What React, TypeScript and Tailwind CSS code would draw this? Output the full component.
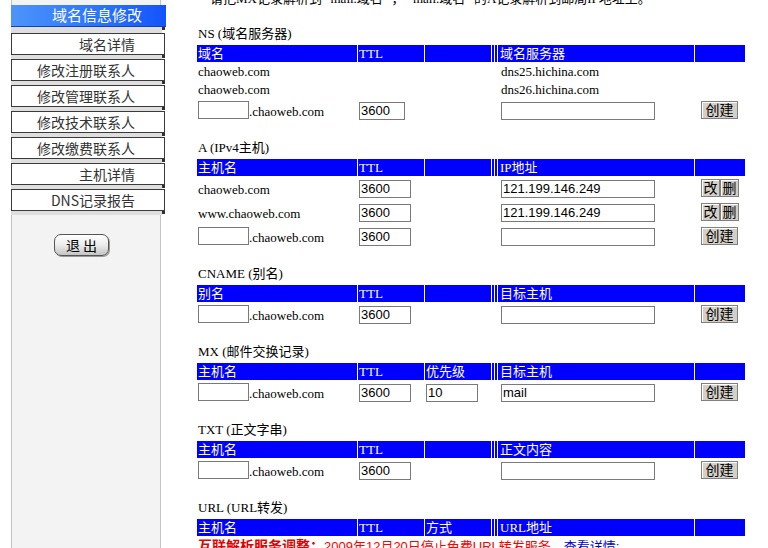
import React from 'react';

const serif = "font-['Liberation_Serif','Noto_Sans_CJK_SC',serif]";
const sans = "font-['Liberation_Sans','Noto_Sans_CJK_SC',sans-serif]";

const menu = ['域名详情', '修改注册联系人', '修改管理联系人', '修改技术联系人', '修改缴费联系人', '主机详情', 'DNS记录报告'];

// gray strip under each sidebar button, with a dark notch at the right end
const Strip = ({ h = 4 }: { h?: number }) => (
  <div className={`flex w-[154px] ${h === 6 ? 'h-[6px]' : 'h-[4px]'}`}>
    <div className="flex-1 bg-[#dedede]" />
    <div className="w-[3px] h-[3px] bg-[#303030]" />
  </div>
);

const Sidebar: React.FC = () => (
  <aside className="w-[165px] shrink-0 h-[548px]">
    <div className="ml-[11px] w-[150px] h-full bg-[#f3f3f3] border-l border-r border-[#c4c4c4] pt-[5px]">
      <div className="-ml-px w-[155px] h-[22px] bg-gradient-to-r from-[#4d94fa] via-[#2f78fb] to-[#1553fb] border-b border-[#1a3fb0] flex items-center justify-end pr-[24px] text-white text-[15px] font-['Noto_Sans_CJK_SC',sans-serif]">
        域名信息修改
      </div>
      <div className="-ml-px">
        <Strip h={6} />
      </div>
      {menu.map((m) => (
        <div key={m} className="-ml-px">
          <div className="w-[154px] h-[22px] bg-white border border-[#3a3a3a] flex items-center justify-end pr-[29px] text-[14px] text-[#333] font-['Noto_Sans_CJK_SC',sans-serif]">
            {m}
          </div>
          <Strip />
        </div>
      ))}
      <div className="mt-[19px] ml-[42px] w-[55px] h-[22px] rounded-[7px] border border-[#555] bg-gradient-to-b from-white via-[#ececec] to-[#c4c4c4] shadow-[1px_1px_0_#999] flex items-center justify-center text-[14px] text-black font-['Noto_Sans_CJK_SC',sans-serif]">
        退&nbsp;出
      </div>
    </div>
  </aside>
);

const Header = ({ a, c3 = '', c6 }: { a: string; c3?: string; c6: string }) => (
  <div className={`flex gap-px h-[17px] leading-[17px] text-white text-[13px] ${serif}`}>
    <div className="w-[160px] bg-[#0000ff] pl-px">{a}</div>
    <div className="w-[66px] bg-[#0000ff] pl-px">TTL</div>
    <div className="w-[66px] bg-[#0000ff] pl-px">{c3}</div>
    <div className="w-[2px] bg-[#0000ff]" />
    <div className="w-[2px] bg-[#0000ff]" />
    <div className="w-[196px] bg-[#0000ff] pl-[2px]">{c6}</div>
    <div className="w-[50px] bg-[#0000ff]" />
  </div>
);

const Input = ({ w, value = '' }: { w: string; value?: string }) => (
  <input
    readOnly
    value={value}
    className={`${w} h-[18px] border border-[#7a7a7a] bg-white px-px text-[13px] leading-[16px] text-black outline-none ${sans}`}
  />
);

const Btn = ({ children, w = 'w-[37px]' }: { children: React.ReactNode; w?: string }) => (
  <div className={`${w} h-[18px] bg-[#d4d0c8] border border-[#808080] shadow-[inset_1px_1px_0_#fff] flex items-center justify-center text-[14px] text-black ${sans}`}>
    {children}
  </div>
);

interface RowProps {
  name?: string;
  ttl?: boolean;
  ttlW?: string;
  prio?: string;
  target?: string;
  edit?: boolean;
}

// form row: either an existing record (name given) or a new one to create
const Row = ({ name, ttl = true, ttlW = 'w-[52px]', prio, target = '', edit }: RowProps) => (
  <div className={`flex h-[24px] pt-[3px] text-[13px] ${serif}`}>
    <div className="w-[161px] pl-px flex items-center h-[18px]">
      {name ? (
        <span className="leading-[18px] mt-[4px]">{name}</span>
      ) : (
        <>
          <Input w="w-[51px]" />
          <span className="mt-[4px]">.chaoweb.com</span>
        </>
      )}
    </div>
    <div className="w-[67px] pl-px">{ttl && <Input w={ttlW} value="3600" />}</div>
    <div className="w-[67px] pl-px">{prio && <Input w="w-[52px]" value={prio} />}</div>
    <div className="w-[6px]" />
    <div className="w-[197px] pl-[3px]">
      <Input w="w-[154px]" value={target} />
    </div>
    <div className="pl-[6px] flex">
      {edit ? (
        <>
          <Btn w="w-[19px]">改</Btn>
          <Btn w="w-[19px]">删</Btn>
        </>
      ) : (
        <Btn>创建</Btn>
      )}
    </div>
  </div>
);

const TextRow = ({ a, b }: { a: string; b: string }) => (
  <div className={`flex h-[18px] leading-[18px] text-[13px] pt-px ${serif}`}>
    <div className="w-[301px] pl-px">{a}</div>
    <div className="pl-[3px]">{b}</div>
  </div>
);

const Title = ({ children }: { children: React.ReactNode }) => (
  <div className={`h-[37px] flex items-end pb-[3px] pl-px text-[13px] leading-[16px] ${serif}`}>{children}</div>
);

export default function App() {
  return (
    <div className="w-[768px] h-[548px] overflow-hidden bg-white flex text-black">
      <Sidebar />
      <main className="ml-[32px] w-[548px] shrink-0">
        <p className={`-mt-[10px] h-[18px] leading-[18px] pl-[13px] text-[13px] whitespace-nowrap ${serif}`}>
          请把MX记录解析到 "mail.域名" ， "mail.域名" 的A记录解析到邮局IP地址上。
        </p>

        <Title>NS (域名服务器)</Title>
        <Header a="域名" c6="域名服务器" />
        <TextRow a="chaoweb.com" b="dns25.hichina.com" />
        <TextRow a="chaoweb.com" b="dns26.hichina.com" />
        <Row ttlW="w-[46px]" />

        <Title>A (IPv4主机)</Title>
        <Header a="主机名" c6="IP地址" />
        <Row name="chaoweb.com" target="121.199.146.249" edit />
        <Row name="www.chaoweb.com" target="121.199.146.249" edit />
        <Row />

        <Title>CNAME (别名)</Title>
        <Header a="别名" c6="目标主机" />
        <Row />

        <Title>MX (邮件交换记录)</Title>
        <Header a="主机名" c3="优先级" c6="目标主机" />
        <Row prio="10" target="mail" />

        <Title>TXT (正文字串)</Title>
        <Header a="主机名" c6="正文内容" />
        <Row />

        <Title>URL (URL转发)</Title>
        <Header a="主机名" c3="方式" c6="URL地址" />
        <p className={`pt-[2px] pl-px text-[13px] leading-[18px] whitespace-nowrap text-[#ff0000] ${serif}`}>
          <b className="text-[14px] text-[#e00000]">互联解析服务调整：</b>
          <span className={sans}>2009年12月20日停止免费URL转发服务，</span>
          <span className={`text-[#0000cc] ${sans}`}>查看详情;</span>
        </p>
      </main>
    </div>
  );
}
